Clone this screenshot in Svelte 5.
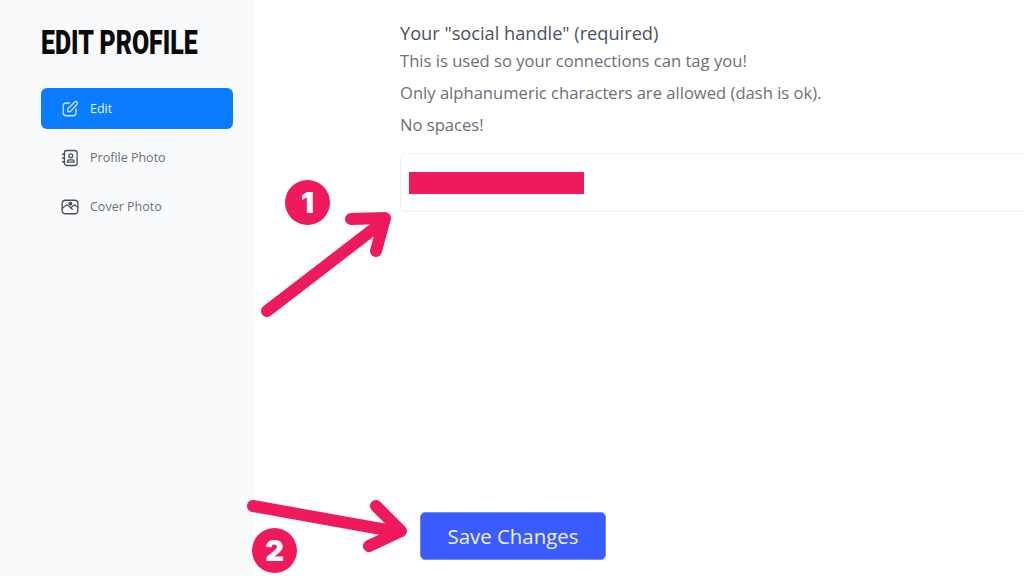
<script>
  const navItems = [
    { label: 'Edit', icon: 'edit', active: true },
    { label: 'Profile Photo', icon: 'contact', active: false },
    { label: 'Cover Photo', icon: 'photo', active: false }
  ];
</script>

<div class="page">
  <aside class="sidebar">
    <h1>EDIT PROFILE</h1>
    <nav>
      {#each navItems as item}
        <a class="nav_item" class:active={item.active} href="#top">
          <svg viewBox="0 0 24 24" width="18" height="18" fill="none" stroke="currentColor" stroke-width="1.7" stroke-linecap="round" stroke-linejoin="round">
            {#if item.icon === 'edit'}
              <path d="M11 4H7a4 4 0 0 0-4 4v9a4 4 0 0 0 4 4h9a4 4 0 0 0 4-4v-5" />
              <path d="M9 15.5v-3.7L18.3 2.600a2.200 2.200 0 0 1 3.100 3.100L12.500 15.500z" />
            {:else if item.icon === 'contact'}
              <rect x="4.500" y="2" width="17" height="20" rx="3.500" />
              <circle cx="13" cy="9" r="2.600" />
              <path d="M8.500 17.500v-.7a2.300 2.300 0 0 1 2.300-2.300h4.400a2.300 2.300 0 0 1 2.300 2.300v.7z" />
              <path d="M2 7h3M2 12h3M2 17h3" />
            {:else}
              <rect x="1.500" y="3" width="21" height="18" rx="4.500" />
              <path d="M1.500 14l4-3.500c1.500-1.200 3-1.200 4.500 0l5 4.500M13 13l3-2.500c1.500-1 3-1 4 0l2.500 2" />
              <circle cx="12.500" cy="7.500" r="1.800" fill="currentColor" />
            {/if}
          </svg>
          <span>{item.label}</span>
        </a>
      {/each}
    </nav>
  </aside>

  <main class="content">
    <h2>Your "social handle" (required)</h2>
    <p class="first">This is used so your connections can tag you!</p>
    <p>Only alphanumeric characters are allowed (dash is ok).</p>
    <p>No spaces!</p>

    <div class="input_box">
      <div class="redacted"></div>
    </div>

    <button class="save">Save Changes</button>
  </main>

  <!-- annotations drawn over the screenshot -->
  <svg class="arrows" viewBox="0 0 1024 576" width="1024" height="576" fill="none" stroke="#ef1a5c" stroke-width="12" stroke-linecap="round" stroke-linejoin="round">
    <path d="M267 311 L384 221" />
    <path d="M351 219 L385 218 L376 251" />
    <path d="M253 506 L398 532" />
    <path d="M376 506 L401 531 L369 546" />
  </svg>
  <div class="badge one">1</div>
  <div class="badge two">2</div>
</div>

<style>
  :global(body) {
    margin: 0;
    background: #fff;
  }

  .page {
    position: relative;
    display: flex;
    width: 1024px;
    height: 576px;
    overflow: hidden;
    font-family: "Open Sans", sans-serif;
  }

  /* Sidebar */
  .sidebar {
    width: 254px;
    flex-shrink: 0;
    box-sizing: border-box;
    padding: 23px 21px 0 41px;
    background: #f8fafc;
  }

  h1 {
    margin: 0 0 25px;
    font-family: Roboto, "Liberation Sans", sans-serif;
    font-size: 33px;
    line-height: 40px;
    font-weight: 900;
    color: #0b0b0b;
    white-space: nowrap;
    transform: scaleX(0.755);
    transform-origin: left center;
  }

  nav {
    display: flex;
    flex-direction: column;
    gap: 8px;
  }

  .nav_item {
    display: flex;
    align-items: center;
    gap: 11px;
    height: 41px;
    padding-left: 20px;
    border-radius: 6px;
    font-size: 12.5px;
    color: #6b7078;
    text-decoration: none;
  }

  .nav_item svg {
    color: #4a4d52;
  }

  .nav_item.active {
    background: #0a7cff;
    color: #e8f2ff;
  }

  .nav_item.active svg {
    color: #d5e8ff;
  }

  /* Form */
  .content {
    flex: 1;
    min-width: 0;
    box-sizing: border-box;
    padding: 21px 0 0 146px;
  }

  h2 {
    margin: 0;
    font-size: 18.2px;
    line-height: 24px;
    font-weight: 400;
    color: #485363;
  }

  p {
    margin: 8px 0 0;
    font-size: 16.6px;
    line-height: 24px;
    color: #6c7076;
    white-space: nowrap;
  }

  p.first {
    margin-top: 4px;
  }

  .input_box {
    width: 700px;
    height: 59px;
    box-sizing: border-box;
    margin-top: 16px;
    padding: 18px 8px;
    border: 1px solid #eff0f3;
    border-radius: 6px;
  }

  .redacted {
    width: 175px;
    height: 22px;
    background: #ef1a5c;
  }

  .save {
    display: block;
    width: 186px;
    height: 48px;
    margin: 300px 0 0 20px;
    border: 1px solid #6d8bff;
    border-radius: 5px;
    background: #3a5bff;
    color: #eef2ff;
    font-family: "Open Sans", sans-serif;
    font-size: 20.4px;
    font-weight: 500;
  }

  /* Annotations */
  .arrows {
    position: absolute;
    top: 0;
    left: 0;
    pointer-events: none;
  }

  .badge {
    position: absolute;
    display: flex;
    align-items: center;
    justify-content: center;
    width: 45px;
    height: 45px;
    border-radius: 50%;
    background: #ef1a5c;
    color: #fff;
    font-family: Inter, sans-serif;
    font-size: 29px;
    font-weight: 900;
  }

  .badge.one {
    left: 285px;
    top: 180px;
  }

  .badge.two {
    left: 252px;
    top: 528px;
  }
</style>
